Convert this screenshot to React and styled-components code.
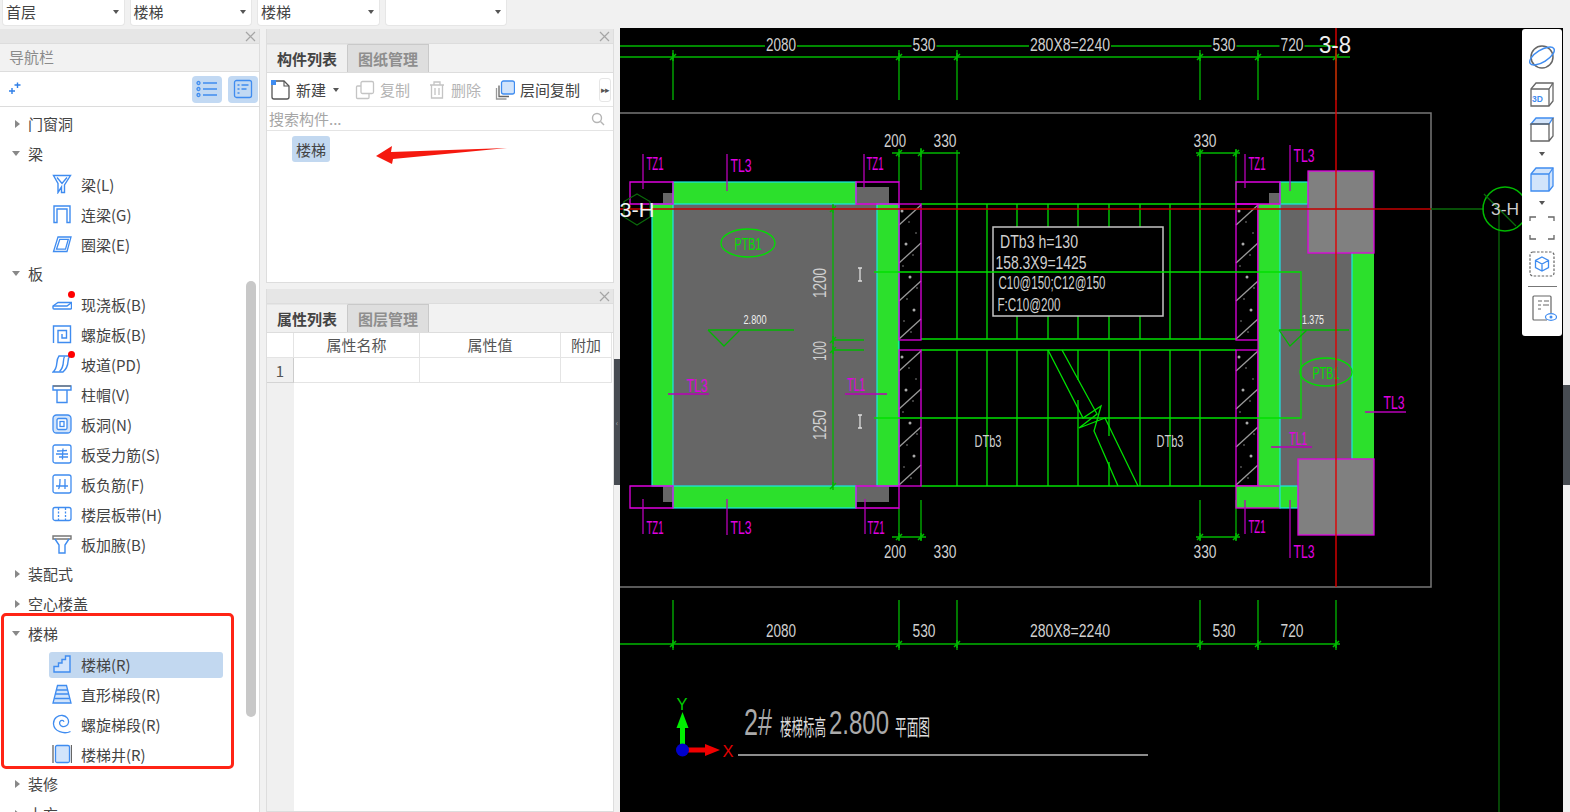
import React from 'react'
import styled, { createGlobalStyle } from 'styled-components'

const GlobalStyle = createGlobalStyle`
html, body {
  margin: 0;
  padding: 0;
  height: 100%;
  overflow: hidden;
  background: #f1f1f1;
  font-family: "Noto Sans CJK SC", "Noto Sans", sans-serif;
  color: #444;
}
* { box-sizing: border-box; }
`

const Page = styled.div`
width: 1570px;
height: 812px;
display: flex;
flex-direction: column;
overflow: hidden;
`
const TopBar = styled.div`
height: 28px;
flex: none;
display: flex;
gap: 5px;
padding-left: 2px;
`
const Dropdown = styled.div`
width: 122.5px;
height: 26px;
background: #fff;
border: 1px solid #e6e6e6;
border-top: none;
border-radius: 0 0 4px 4px;
display: flex;
align-items: center;
justify-content: space-between;
padding: 0 5px 2px 3px;
font-size: 15px;
color: #444;
`
const Caret = styled.span`
width: 0;
height: 0;
border-left: 3.5px solid transparent;
border-right: 3.5px solid transparent;
border-top: 4px solid #555;
margin: ${p => p.$margin || '0 0 0 0'};
`
const Main = styled.div`
flex: 1;
display: flex;
min-height: 0;
`
const NavPanel = styled.div`
width: 260px;
margin-top: 1px;
background: #fff;
border-right: 1px solid #ddd;
display: flex;
flex-direction: column;
position: relative;
overflow: hidden;
`
const Strip = styled.div`
height: 15px;
flex: none;
background: #e6e6e6;
display: flex;
align-items: center;
justify-content: flex-end;
padding-right: 3px;
border-bottom: 1px solid #ddd;
`
const NavTitle = styled.div`
height: 28px;
flex: none;
background: #f2f2f2;
border-bottom: 1px solid #ddd;
display: flex;
align-items: center;
padding: 0 0 2px 9px;
font-size: 15px;
color: #8b8b8b;
`
const NavTools = styled.div`
height: 35px;
flex: none;
display: flex;
align-items: center;
padding: 0 1px 0 8px;
gap: 6px;
border-bottom: 1px solid #dcdcdc;
`
const ToolSpacer = styled.div`
flex: 1;
`
const ToggleBtn = styled.div`
width: 30px;
height: 27px;
background: #c2d9f3;
border-radius: 4px;
display: flex;
align-items: center;
justify-content: center;
`
const Tree = styled.div`
padding-top: 3px;
flex: 1;
`
const TreeGroup = styled.div`
display: flex;
flex-direction: column;
`
const GroupRow = styled.div`
height: 30px;
display: flex;
align-items: center;
padding: 0 0 3px 13px;
font-size: 15px;
color: #444;
`
const Arrow = styled.span`
width: 15px;
display: flex;
align-items: center;
`
const Closed = styled.span`
width: 0;
height: 0;
border-top: 4px solid transparent;
border-bottom: 4px solid transparent;
border-left: 5px solid #888;
margin-left: 2px;
`
const Open = styled.span`
width: 0;
height: 0;
border-left: 4.5px solid transparent;
border-right: 4.5px solid transparent;
border-top: 5px solid #888;
margin-left: -1px;
`
const ItemRow = styled.div`
height: 26px;
margin: 2px 36px 2px 49px;
padding: 0 0 2px 3px;
display: flex;
align-items: center;
gap: 9px;
font-size: 15px;
color: #444;
border-radius: 3px;
background: ${p => (p.$active ? '#c2d8f0' : 'transparent')};
`
const IconBox = styled.span`
width: 20px;
height: 20px;
flex: none;
position: relative;
display: block;
`
const RedDot = styled.i`
position: absolute;
width: 7px;
height: 7px;
border-radius: 50%;
background: #f00;
right: -3px;
top: -3px;
`
const ScrollThumb = styled.div`
position: absolute;
left: 246px;
top: 252px;
width: 10px;
height: 436px;
border-radius: 5px;
background: #c8c8c8;
`
const RedFrame = styled.div`
position: absolute;
left: 1px;
top: 584px;
width: 233px;
height: 156px;
border: 3px solid #ff2415;
border-radius: 5px;
pointer-events: none;
`
const Gutter = styled.div`
width: ${p => p.$w}px;
flex: none;
padding-top: ${p => p.$top}px;
`
const HandleBar = styled.div`
height: ${p => p.$h}px;
width: 100%;
background: #474c52;
display: flex;
align-items: center;
justify-content: center;
color: #aaa;
font-size: 8px;
`
const Middle = styled.div`
width: 348px;
flex: none;
margin-top: 1px;
display: flex;
flex-direction: column;
gap: 6px;
`
const SidePanel = styled.div`
background: #fff;
border: 1px solid #ddd;
border-top: none;
display: flex;
flex-direction: column;
position: relative;
flex: ${p => (p.$grow ? 1 : 'none')};
height: ${p => (p.$grow ? 'auto' : `${p.$h}px`)};
min-height: 0;
`
const TabRow = styled.div`
height: 29px;
flex: none;
display: flex;
background: #f2f2f2;
border-bottom: 1px solid #ddd;
`
const Tab = styled.div`
width: ${p => p.$w}px;
display: flex;
align-items: center;
justify-content: center;
padding-bottom: 1px;
font-size: 15px;
font-weight: 700;
color: ${p => (p.$on ? '#444' : '#8e8e8e')};
background: ${p => (p.$on ? '#f0f0f0' : '#dedede')};
border-right: 1px solid #c9c9c9;
border-top: 1px solid ${p => (p.$on ? '#e6e6e6' : '#c9c9c9')};
`
const ListTools = styled.div`
height: 34px;
flex: none;
display: flex;
align-items: center;
padding-left: 3px;
border-bottom: 1px solid #e4e4e4;
font-size: 15px;
`
const ToolBtn = styled.div`
display: flex;
align-items: center;
gap: ${p => p.$gap || 5}px;
width: ${p => p.$w}px;
flex: none;
color: ${p => (p.$off ? '#b4b4b4' : '#444')};
`
const MoreBtn = styled.div`
width: 12px;
height: 24px;
margin-left: 1px;
border: 1px solid #e6e6e6;
border-radius: 3px;
font-size: 9px;
color: #555;
display: flex;
align-items: center;
justify-content: center;
letter-spacing: -1px;
`
const SearchRow = styled.div`
height: 24px;
flex: none;
display: flex;
align-items: center;
justify-content: space-between;
padding: 0 8px 0 2px;
font-size: 15px;
color: #a6a6a6;
border-bottom: 1px solid #e4e4e4;
`
const ListBody = styled.div`
flex: 1;
padding: 5px 0 0 25px;
`
const Chip = styled.div`
width: 38px;
height: 26px;
border-radius: 3px;
background: #c2d8f0;
font-size: 15px;
color: #444;
display: flex;
align-items: center;
justify-content: center;
`
const Pointer = styled.svg`
position: absolute;
left: 0;
top: 0;
pointer-events: none;
`
const PropGrid = styled.div`
flex: 1;
display: grid;
grid-template-columns: 27px 126px 141px 51px;
grid-template-rows: 25px 25px 1fr;
font-size: 15px;
color: #555;
width: 346px;
`
const PropHead = styled.div`
display: flex;
align-items: center;
justify-content: center;
padding-bottom: 2px;
border-right: 1px solid #e4e4e4;
border-bottom: 1px solid #e4e4e4;
`
const PropCell = styled.div`
border-right: 1px solid #e4e4e4;
border-bottom: 1px solid #e4e4e4;
`
const RowNo = styled.div`
display: flex;
align-items: center;
justify-content: center;
background: #f0f0f0;
border-right: 1px solid #ccc;
border-bottom: 1px solid #d4d4d4;
color: #555;
`
const GutterFill = styled.div`
background: #f0f0f0;
`
const Canvas = styled.div`
width: 943px;
flex: none;
position: relative;
background: #000;
`
const Drawing = styled.svg`
display: block;
`
const CadText = styled.text`
font-family: "Liberation Sans", sans-serif;
dominant-baseline: central;
text-anchor: middle;
`
const CadCjk = styled.text`
font-family: "Noto Sans CJK SC", sans-serif;
dominant-baseline: central;
text-anchor: start;
`
const ViewTools = styled.div`
position: absolute;
right: 1px;
top: 1px;
width: 40px;
height: 307px;
background: #fff;
border-radius: 3px;
display: flex;
flex-direction: column;
align-items: center;
padding-top: 10px;
`
const ViewIcon = styled.div`
height: ${p => p.$h}px;
width: 100%;
flex: none;
display: flex;
align-items: center;
justify-content: center;
`
const ViewRule = styled.div`
width: 29px;
height: 1px;
background: #777;
margin: 4px 0 4px;
flex: none;
`

const CloseX = () => (
  <svg width="11" height="11" viewBox="0 0 11 11">
    <path d="M1 1l9 9M10 1l-9 9" stroke="#a5a5a5" strokeWidth="1.2" />
  </svg>
)

const BLUE = '#3f8cf0'
const PALE = '#d2e4fb'

const treeIcons = {
  beam: <path d="M1.5 1.5h17L12.5 11v7.5h-3V13L6 18.5V9.5zM5 3.5l5 6 5-6" fill="none" stroke={BLUE} strokeWidth="1.4" />,
  lintel: <path d="M2 18.5V2h16v16.5h-3V5H5v13.5z" fill="none" stroke={BLUE} strokeWidth="1.4" />,
  ring: <path d="M6 3h13l-4 14.5H1.500zM7.800 5.300h8.500l-2.800 9.900H4.500z" fill="none" stroke={BLUE} strokeWidth="1.3" />,
  slab: <g fill="none" stroke={BLUE} strokeWidth="1.4"><path d="M1 12l5-3.500h13.500V14a1 1 0 0 1-1 1H2a1 1 0 0 1-1-1z" /><path d="M1 12h14l4-3" /></g>,
  spiral: <path d="M1.500 19V2h17v16.500H6V6.500h8.500V14H10V10" fill="none" stroke={BLUE} strokeWidth="1.4" />,
  ramp: <g fill="none" stroke={BLUE} strokeWidth="1.4"><path d="M7 2h11c-4 3 1 9-7 16H1c6-5 2-11 6-16z" /><path d="M12.500 2.500c-2.500 4 1 9-5 15" /></g>,
  cap: <g fill="none" stroke={BLUE} strokeWidth="1.4"><path d="M1 2h18v4H1z" /><path d="M5 6v12.500h10V6" /><path d="M1 2h18" stroke="#777" /></g>,
  hole: <g fill="none" stroke={BLUE} strokeWidth="1.3"><rect x="1" y="1" width="18" height="18" rx="3.500" fill={PALE} /><rect x="5" y="4.500" width="10" height="11" rx="1.500" fill="#fff" /><rect x="8" y="7.500" width="4" height="5" /></g>,
  rebar: <g fill="none" stroke={BLUE} strokeWidth="1.3"><rect x="1" y="1" width="18" height="18" rx="2" /><path d="M4 10h12M5 7c2 0 7-.5 10-.5M11 4.500c-.5 5-.5 8-.5 11M7 13h9" /></g>,
  negative: <g fill="none" stroke={BLUE} strokeWidth="1.3"><rect x="1" y="1" width="18" height="18" rx="2" /><path d="M4 12h12M8 5c0 5 0 8-1.500 10M13 5v10" /></g>,
  strip: <g fill="none" stroke={BLUE} strokeWidth="1.3"><rect x="1" y="3.500" width="18" height="13" rx="2" /><path d="M6.500 4v12M13.500 4v12" strokeDasharray="2 1.500" /></g>,
  haunch: <g fill="none" strokeWidth="1.4"><path d="M1 2h18v3H1z" stroke="#777" /><path d="M3 5l4 6v8h6v-8l4-6" stroke={BLUE} /></g>,
  stair: <path d="M2 18v-5.500h4.500V9h3.500V5.500h3.500V2h4.500v16z" fill={PALE} stroke={BLUE} strokeWidth="1.4" />,
  flight: <g fill="none" stroke={BLUE} strokeWidth="1.3"><path d="M5.500 1.500h9L19 19H1z" fill={PALE} /><path d="M4.600 6h10.800M3.300 10h13.400M2.300 14.500h15.400" /></g>,
  coil: <path d="M18.500 17.500C12 20.500 2 17.500 1.500 10 1.200 4 6.500 1 10.500 1.500c4 .5 6.500 3.500 6 7-.5 3-3.500 4.500-6 4-2.500-.6-3.500-3-2.500-5 1-1.500 3.500-1.500 4 .2" fill="none" stroke={BLUE} strokeWidth="1.300" />,
  well: <g fill="none"><path d="M1 1v18" stroke="#666" strokeWidth="1.300" /><rect x="3.500" y="1.500" width="14" height="17" rx="1.500" fill={PALE} stroke={BLUE} strokeWidth="1.300" /><path d="M19.500 1v18" stroke="#666" strokeWidth="1.300" /></g>,
}

const TreeIcon = ({ name, dot }) => (
  <IconBox>
    <svg width="20" height="20" viewBox="0 0 20 20">{treeIcons[name]}</svg>
    {dot && <RedDot />}
  </IconBox>
)

const tree = [
  { name: '门窗洞' },
  {
    name: '梁', open: true, items: [
      { name: '梁(L)', icon: 'beam' },
      { name: '连梁(G)', icon: 'lintel' },
      { name: '圈梁(E)', icon: 'ring' },
    ],
  },
  {
    name: '板', open: true, items: [
      { name: '现浇板(B)', icon: 'slab', dot: true },
      { name: '螺旋板(B)', icon: 'spiral' },
      { name: '坡道(PD)', icon: 'ramp', dot: true },
      { name: '柱帽(V)', icon: 'cap' },
      { name: '板洞(N)', icon: 'hole' },
      { name: '板受力筋(S)', icon: 'rebar' },
      { name: '板负筋(F)', icon: 'negative' },
      { name: '楼层板带(H)', icon: 'strip' },
      { name: '板加腋(B)', icon: 'haunch' },
    ],
  },
  { name: '装配式' },
  { name: '空心楼盖' },
  {
    name: '楼梯', open: true, items: [
      { name: '楼梯(R)', icon: 'stair', active: true },
      { name: '直形梯段(R)', icon: 'flight' },
      { name: '螺旋梯段(R)', icon: 'coil' },
      { name: '楼梯井(R)', icon: 'well' },
    ],
  },
  { name: '装修' },
  { name: '土方' },
]

// everything below is in page coordinates, the viewBox starts where the canvas does
const GREEN = '#00b800'
const BRIGHT = '#00e000'
const DARKG = '#0a6a0a'
const PURPLE = '#e000e0'
const LEADER = '#b800b8'
const CYAN = '#19e6e6'
const FILL = '#2ce02c'
const DIM = '#666666'
const BLOCK = '#808080'

const treads = [957, 987, 1017, 1048, 1078, 1109, 1140, 1170, 1200]
const lowerTreads = [
  [957, 350, 486], [987, 350, 486], [1017, 350, 486], [1048, 350, 486], [1078, 400, 486], [1109, 462, 486],
  [1078, 350, 380], [1109, 350, 436], [1140, 350, 486], [1170, 350, 486], [1200, 350, 486],
]
const hatchYs = [[204, 340], [350, 486]]

const Wall = ({ x }) => (
  <g>
    {hatchYs.map(([a, b]) => {
      const lines = []
      for (let y = b; y > a + 16; y -= 38) lines.push(y)
      return (
        <g key={a}>
          {lines.map(y => (
            <line key={y} x1={x} y1={y - 1} x2={x + 22} y2={y - 21} stroke="#9a9a9a" strokeWidth="1.300" />
          ))}
          {[0, 1, 2, 3, 4, 5, 6, 7, 8, 9, 10, 11].map(i => (
            <circle key={i} cx={x + 3 + (i * 7) % 17} cy={a + 7 + i * 11} r={i % 3 === 0 ? 1.500 : 0.700} fill="#aaa" />
          ))}
          <rect x={x} y={a} width="22" height={b - a} fill="none" stroke={PURPLE} strokeWidth="1.300" />
        </g>
      )
    })}
  </g>
)

const dims = [
  ['2080', 781, 30], ['530', 924, 23], ['280X8=2240', 1070, 80], ['530', 1224, 23], ['720', 1292, 23],
]
const purpleTexts = [
  ['TZ1', 655, 164, 17], ['TL3', 741, 166, 21], ['TZ1', 875, 164, 17], ['TZ1', 1257, 164, 17], ['TL3', 1304, 156, 21],
  ['TZ1', 655, 528, 17], ['TL3', 741, 528, 21], ['TZ1', 876, 528, 17], ['TZ1', 1257, 527, 17], ['TL3', 1304, 552, 21],
  ['TL3', 697, 386, 21], ['TL1', 856, 385, 18], ['TL1', 1298, 439, 18], ['TL3', 1394, 403, 21],
]
const leaders = [
  [643, 154, 189], [727, 154, 191], [864, 154, 188], [1245, 154, 188], [1290, 145, 191],
  [643, 499, 534], [727, 499, 535], [865, 499, 534], [1245, 500, 534], [1290, 500, 558],
]
const underlines = [[668, 709, 394], [845, 887, 394], [1271, 1312, 447], [1365, 1406, 412]]
const noteLines = [
  ['DTb3 h=130', 1039, 241, 78], ['158.3X9=1425', 1041, 262, 91], ['C10@150;C12@150', 1052, 282, 107], ['F:C10@200', 1029, 304, 63],
]

const Tick = ({ x, y }) => <path d={`M${x - 3} ${y + 3}L${x + 3} ${y - 3}M${x} ${y - 4}v8`} stroke={GREEN} strokeWidth="1.500" />

const Label = ({ x, y, w, size = 18, fill = '#d0d0d0', rotate, children }) => (
  <CadText
    x={x}
    y={y}
    fontSize={size}
    fill={fill}
    textLength={w}
    lengthAdjust="spacingAndGlyphs"
    transform={rotate ? `rotate(-90 ${x} ${y})` : undefined}
  >
    {children}
  </CadText>
)

const CadDrawing = () => (
  <Drawing width="943" height="784" viewBox="620 28 943 784">
    {/* dimension rows */}
    <path d="M620 46H1336M620 57H1350M620 644H1340" stroke={GREEN} strokeWidth="1.500" fill="none" />
    {[673, 899, 957, 1200, 1258, 1336].map(x => (
      <g key={x}>
        <line x1={x} y1="50" x2={x} y2="100" stroke={GREEN} strokeWidth="1.300" />
        <line x1={x} y1="600" x2={x} y2="650" stroke={GREEN} strokeWidth="1.300" />
        <Tick x={x} y={57} />
        <Tick x={x} y={644} />
      </g>
    ))}
    {dims.map(([t, x, w], i) => (
      <g key={i}>
        <rect x={x - w / 2 - 1} y="38" width={w + 2} height="14" fill="#000" />
        <Label x={x} y={45} w={w}>{t}</Label>
        <Label x={x} y={631} w={w}>{t}</Label>
      </g>
    ))}
    <rect x="610" y="113" width="821" height="474" fill="none" stroke="#777" strokeWidth="1.500" />

    {/* lower and upper extension lines */}
    <path d="M899 153V182M921 148V190M957 150V204M1200 150V204M1236 150V190M892 153H960M1196 153H1240" stroke={GREEN} strokeWidth="1.300" fill="none" />
    <path d="M899 508V540M921 500V540M1200 500V540M1236 500V540M892 537H926M1196 537H1240" stroke={GREEN} strokeWidth="1.300" fill="none" />
    <Tick x={899} y={153} /><Tick x={921} y={153} /><Tick x={1200} y={153} /><Tick x={1236} y={153} />
    <Tick x={899} y={537} /><Tick x={921} y={537} /><Tick x={1200} y={537} /><Tick x={1236} y={537} />

    {/* left landing */}
    <rect x="673" y="204" width="204" height="282" fill={DIM} />
    <rect x="663" y="193" width="10" height="11" fill={DIM} />
    <rect x="856" y="187" width="33" height="17" fill={DIM} />
    <rect x="663" y="486" width="10" height="16" fill={DIM} />
    <rect x="856" y="486" width="33" height="16" fill={DIM} />
    <rect x="652" y="204" width="21" height="282" fill={FILL} stroke={CYAN} strokeWidth="1.200" />
    <rect x="877" y="204" width="22" height="282" fill={FILL} stroke={CYAN} strokeWidth="1.200" />
    <rect x="673" y="182" width="183" height="22" fill={FILL} stroke={CYAN} strokeWidth="1.200" />
    <rect x="673" y="486" width="183" height="22" fill={FILL} stroke={CYAN} strokeWidth="1.200" />
    <path d="M630 182H673V204H630ZM856 182H899V204H856ZM630 486H673V508H630ZM856 486H899V508H856Z" fill="none" stroke={PURPLE} strokeWidth="1.300" />

    {/* stairs */}
    <path d="M921 204H1236M921 339H1236M921 350H1236M921 486H1236" stroke={BRIGHT} strokeWidth="1.300" fill="none" />
    {treads.map(x => <line key={x} x1={x} y1="204" x2={x} y2="339" stroke={BRIGHT} strokeWidth="1.300" />)}
    {lowerTreads.map(([x, a, b], i) => <line key={i} x1={x} y1={a} x2={x} y2={b} stroke={BRIGHT} strokeWidth="1.300" />)}
    <path d="M1048 350L1083 418 1101 406 1094 431 1118 486M1062 350L1097 414 1079 428 1105 418 1138 486" stroke={BRIGHT} strokeWidth="1.300" fill="none" />
    <Wall x={899} />
    <Wall x={1236} />
    <rect x="993" y="227" width="170" height="89" fill="#000" stroke="#c4c4c4" strokeWidth="1.500" />
    {noteLines.map(([t, x, y, w]) => <Label key={t} x={x} y={y} w={w} size={19}>{t}</Label>)}
    <Label x={988} y={441} w={27} size={17}>DTb3</Label>
    <Label x={1170} y={441} w={27} size={17}>DTb3</Label>

    {/* right landing */}
    <rect x="1280" y="204" width="72" height="282" fill={DIM} />
    <rect x="1269" y="193" width="11" height="11" fill={DIM} />
    <rect x="1258" y="204" width="22" height="282" fill={FILL} />
    <path d="M1258 204V486" stroke={PURPLE} strokeWidth="1.300" />
    <path d="M1280 204V486" stroke={CYAN} strokeWidth="1.200" />
    <rect x="1280" y="182" width="28" height="22" fill={FILL} stroke={CYAN} strokeWidth="1.200" />
    <rect x="1352" y="253" width="22" height="206" fill={FILL} />
    <path d="M1352 253V459" stroke={CYAN} strokeWidth="1.200" />
    <path d="M1236 182H1280V204H1236Z" fill="none" stroke={PURPLE} strokeWidth="1.300" />
    <rect x="1236" y="486" width="44" height="22" fill={FILL} stroke={PURPLE} strokeWidth="1.300" />
    <rect x="1280" y="486" width="18" height="22" fill={FILL} stroke={CYAN} strokeWidth="1.200" />
    <rect x="1308" y="171" width="66" height="82" fill={BLOCK} stroke={PURPLE} strokeWidth="1.300" />
    <rect x="1298" y="459" width="76" height="76" fill={BLOCK} stroke={PURPLE} strokeWidth="1.300" />
    <path d="M874 272H1301V418H874" stroke={BRIGHT} strokeWidth="1.300" fill="none" />

    {/* floor level marks and plate tags */}
    <path d="M708 330H794M708 330L724 346 740 330" stroke={GREEN} strokeWidth="1.300" fill="none" />
    <path d="M1279 330H1349M1279 330L1290 346 1307 330" stroke={GREEN} strokeWidth="1.300" fill="none" />
    <Label x={755} y={320} w={23} size={12} fill="#eee">2.800</Label>
    <Label x={1313} y={320} w={22} size={12} fill="#eee">1.375</Label>
    <ellipse cx="748" cy="243" rx="27" ry="14" fill="none" stroke={BRIGHT} strokeWidth="1.300" />
    <ellipse cx="1326" cy="372" rx="26" ry="14" fill="none" stroke={BRIGHT} strokeWidth="1.300" />
    <Label x={748} y={244} w={27} size={17} fill={BRIGHT}>PTB1</Label>
    <Label x={1326} y={373} w={27} size={17} fill={BRIGHT}>PTB1</Label>

    {/* section dimension */}
    <path d="M833 204V486M833 340H864M833 350H864" stroke={GREEN} strokeWidth="1.300" fill="none" />
    <Tick x={833} y={209} /><Tick x={833} y={340} /><Tick x={833} y={350} /><Tick x={833} y={486} />
    <Label x={820} y={283} w={30} rotate>1200</Label>
    <Label x={820} y={351} w={20} rotate>100</Label>
    <Label x={820} y={425} w={30} rotate>1250</Label>
    <path d="M860 268V281M858 268H862M858 281H862" stroke="#ddd" strokeWidth="1.300" fill="none" />
    <path d="M860 415V428M858 415H862M858 428H862" stroke="#ddd" strokeWidth="1.300" fill="none" />

    {/* purple leaders and labels */}
    {leaders.map(([x, a, b], i) => <line key={i} x1={x} y1={a} x2={x} y2={b} stroke={LEADER} strokeWidth="1.300" />)}
    {underlines.map(([a, b, y], i) => <line key={i} x1={a} y1={y} x2={b} y2={y} stroke={LEADER} strokeWidth="1.300" />)}
    {purpleTexts.map(([t, x, y, w], i) => <Label key={i} x={x} y={y} w={w} size={18} fill={PURPLE}>{t}</Label>)}

    {/* axes */}
    <line x1="620" y1="209" x2="1431" y2="209" stroke="#c40000" strokeWidth="1.600" />
    <line x1="1431" y1="209" x2="1484" y2="209" stroke={DARKG} strokeWidth="1.500" />
    <line x1="1336" y1="28" x2="1336" y2="587" stroke="#e00000" strokeWidth="1.400" />
    <line x1="1499" y1="209" x2="1499" y2="812" stroke={DARKG} strokeWidth="1.300" />
    <polygon points="637,194 650,201.500 650,217 637,225 624,217 624,201.500" fill="none" stroke={DARKG} strokeWidth="1.200" />
    <Label x={637} y={209} w={35} size={21} fill="#f2f2f2">3-H</Label>
    <circle cx="1505" cy="209" r="22" fill="none" stroke={GREEN} strokeWidth="1.500" />
    <line x1="1484" y1="194" x2="1516" y2="226" stroke={DARKG} strokeWidth="1.300" />
    <Label x={1505} y={209} w={28} size={17} fill="#ccc">3-H</Label>
    <Label x={1335} y={45} w={32} size={23} fill="#eee">3-8</Label>

    <Label x={895} y={141} w={22}>200</Label>
    <Label x={945} y={141} w={23}>330</Label>
    <Label x={1205} y={141} w={23}>330</Label>
    <Label x={895} y={552} w={22}>200</Label>
    <Label x={945} y={552} w={23}>330</Label>
    <Label x={1205} y={552} w={23}>330</Label>

    {/* title block */}
    <Label x={758} y={722} w={28} size={36} fill="#aaa">2#</Label>
    <CadCjk x={780} y={725} fontSize="22" fill="#ddd" textLength="46" lengthAdjust="spacingAndGlyphs">楼梯标高</CadCjk>
    <Label x={859} y={722} w={60} size={34} fill="#aaa">2.800</Label>
    <CadCjk x={895} y={725} fontSize="22" fill="#ddd" textLength="35" lengthAdjust="spacingAndGlyphs">平面图</CadCjk>
    <line x1="738" y1="755" x2="1148" y2="755" stroke="#bbb" strokeWidth="1.500" />

    {/* ucs gizmo */}
    <rect x="680" y="726" width="5" height="20" fill="#00ee00" />
    <polygon points="682.500,712 676.500,728 688.500,728" fill="#00ee00" />
    <rect x="686" y="747.500" width="22" height="5" fill="#f00000" />
    <polygon points="720,750 705,744 705,756" fill="#f00000" />
    <circle cx="682.500" cy="750" r="6.500" fill="#0000cc" />
    <Label x={682} y={704} w={11} size={16} fill="#00cc00">Y</Label>
    <Label x={728} y={751} w={11} size={16} fill="#e00000">X</Label>
  </Drawing>
)

const ViewIcons = {
  orbit: (
    <svg width="30" height="30" viewBox="0 0 30 30" fill="none" strokeWidth="1.500">
      <circle cx="15" cy="15" r="11" stroke="#666" />
      <ellipse cx="15" cy="14" rx="14" ry="6" transform="rotate(-32 15 14)" stroke={BLUE} />
    </svg>
  ),
  cube3d: (
    <svg width="28" height="28" viewBox="0 0 28 28" fill="none" strokeWidth="1.300">
      <path d="M3 9l5-6h17v18l-4 5H3z" stroke="#666" />
      <path d="M3 9h18v17M21 9l4-6" stroke="#666" />
      <text x="4" y="22" fontSize="8.500" fontWeight="700" fill={BLUE} stroke="none" fontFamily="Liberation Sans">3D</text>
    </svg>
  ),
  cubeTop: (
    <svg width="28" height="28" viewBox="0 0 28 28" fill="none" strokeWidth="1.300">
      <path d="M3 9l5-6h17l-4 6z" fill={PALE} stroke={BLUE} />
      <path d="M3 9h18v17H3zM21 26l4-5V3" stroke="#666" />
    </svg>
  ),
  cubeSolid: (
    <svg width="28" height="28" viewBox="0 0 28 28" strokeWidth="1.300">
      <path d="M3 9l5-6h17v18l-4 5H3z" fill={PALE} stroke={BLUE} />
      <path d="M3 9h18v17M21 9l4-6" fill="none" stroke={BLUE} />
    </svg>
  ),
  corners: (
    <svg width="28" height="28" viewBox="0 0 28 28" fill="none" stroke="#666" strokeWidth="1.300">
      <path d="M2 7V3h6M20 3h6v4M26 21v4h-6M8 25H2v-4" />
    </svg>
  ),
  dashedCube: (
    <svg width="28" height="28" viewBox="0 0 28 28" fill="none" strokeWidth="1.200">
      <rect x="2" y="2" width="24" height="24" rx="3" stroke="#666" strokeDasharray="2.500 1.500" />
      <path d="M14 7l6.500 3.500v7L14 21l-6.500-3.500v-7zM7.500 10.500L14 14l6.500-3.500M14 14v7" stroke={BLUE} strokeWidth="1.300" />
    </svg>
  ),
  docEye: (
    <svg width="30" height="30" viewBox="0 0 30 30" fill="none" strokeWidth="1.200">
      <path d="M21 21V5a1 1 0 0 0-1-1H4a1 1 0 0 0-1 1v22a1 1 0 0 0 1 1h13" transform="translate(3 -1)" stroke="#666" />
      <path d="M11 8h4M17 8h5M11 12h3M16 12h6M11 16h3" stroke="#666" />
      <ellipse cx="24" cy="24" rx="5.500" ry="3.300" stroke={BLUE} />
      <circle cx="24" cy="24" r="1.500" fill={BLUE} />
    </svg>
  ),
}

const NewDoc = () => (
  <svg width="22" height="22" viewBox="0 0 22 22" fill="none">
    <path d="M2 6v12a2 2 0 0 0 2 2h13a2 2 0 0 0 2-2V7l-5-5H6" stroke="#555" strokeWidth="1.300" />
    <path d="M14 2v5h5" stroke="#555" strokeWidth="1.100" />
    <rect x="1" y="1" width="5" height="5" fill={BLUE} />
  </svg>
)
const CopyIcon = () => (
  <svg width="20" height="20" viewBox="0 0 20 20" fill="none" stroke="#c4c4c4" strokeWidth="1.300">
    <rect x="6" y="1.500" width="12.500" height="12" rx="1.500" />
    <path d="M6 6H2.500a1 1 0 0 0-1 1v10.500a1 1 0 0 0 1 1H13a1 1 0 0 0 1-1V14" />
  </svg>
)
const TrashIcon = () => (
  <svg width="18" height="20" viewBox="0 0 18 20" fill="none" stroke="#c4c4c4" strokeWidth="1.300">
    <path d="M2 5h14M6 5V2h6v3M3.500 5v13h11V5M7 8v7M11 8v7" />
  </svg>
)
const FloorCopyIcon = () => (
  <svg width="20" height="20" viewBox="0 0 20 20" fill="none" strokeWidth="1.300">
    <rect x="6.500" y="1" width="13" height="13" rx="2" fill={PALE} stroke={BLUE} />
    <path d="M4 5.500v11h10" stroke="#666" />
    <path d="M1.500 8v11h10" stroke="#999" />
  </svg>
)

export default function App() {
  return (
    <Page>
      <GlobalStyle />
      <TopBar>
        {['首层', '楼梯', '楼梯', ''].map((v, i) => (
          <Dropdown key={i}><span>{v}</span><Caret /></Dropdown>
        ))}
      </TopBar>
      <Main>
        <NavPanel>
          <Strip><CloseX /></Strip>
          <NavTitle>导航栏</NavTitle>
          <NavTools>
            <svg width="14" height="14" viewBox="0 0 14 14" stroke="#2f7fe8" strokeWidth="1.400">
              <path d="M6.500 3h6M9.500 .5v5.500M1 9h6M4 6v6" />
            </svg>
            <ToolSpacer />
            <ToggleBtn>
              <svg width="22" height="18" viewBox="0 0 22 18" fill="none" stroke={BLUE} strokeWidth="1.300">
                <circle cx="2.500" cy="3" r="1.500" /><circle cx="2.500" cy="9" r="1.500" /><circle cx="2.500" cy="15" r="1.500" />
                <path d="M7 3h14M7 9h14M7 15h14" />
              </svg>
            </ToggleBtn>
            <ToggleBtn>
              <svg width="20" height="20" viewBox="0 0 20 20" fill="none" stroke={BLUE} strokeWidth="1.300">
                <rect x="1.500" y="1.500" width="17" height="17" rx="2" />
                <path d="M4.500 6h2M8.500 6h7M4.500 10h2M8.500 10h5M4.500 14h2" />
              </svg>
            </ToggleBtn>
          </NavTools>
          <Tree>
            {tree.map(g => (
              <TreeGroup key={g.name}>
                <GroupRow><Arrow>{g.open ? <Open /> : <Closed />}</Arrow>{g.name}</GroupRow>
                {g.items && g.items.map(it => (
                  <ItemRow key={it.name} $active={it.active}>
                    <TreeIcon name={it.icon} dot={it.dot} />
                    {it.name}
                  </ItemRow>
                ))}
              </TreeGroup>
            ))}
          </Tree>
          <ScrollThumb />
          <RedFrame />
        </NavPanel>
        <Gutter $w={6} $top={0} />
        <Middle>
          <SidePanel $h={254}>
            <Strip><CloseX /></Strip>
            <TabRow>
              <Tab $on $w={81}>构件列表</Tab>
              <Tab $w={81}>图纸管理</Tab>
            </TabRow>
            <ListTools>
              <ToolBtn $w={85} $gap={4}><NewDoc />新建<Caret $margin="0 0 0 3px" /></ToolBtn>
              <ToolBtn $w={73} $off><CopyIcon />复制</ToolBtn>
              <ToolBtn $w={67} $off><TrashIcon />删除</ToolBtn>
              <ToolBtn $w={103}><FloorCopyIcon />层间复制</ToolBtn>
              <MoreBtn>▸▸</MoreBtn>
            </ListTools>
            <SearchRow>
              搜索构件...
              <svg width="14" height="14" viewBox="0 0 14 14" fill="none" stroke="#b5b5b5" strokeWidth="1.400">
                <circle cx="6" cy="6" r="4.500" /><path d="M9.500 9.500L13 13" />
              </svg>
            </SearchRow>
            <ListBody><Chip>楼梯</Chip></ListBody>
            <Pointer width="348" height="254">
              <polygon points="109,127 125,117 124,123 240,119 126,130 125,135" fill="#f5190f" />
            </Pointer>
          </SidePanel>
          <SidePanel $grow>
            <Strip><CloseX /></Strip>
            <TabRow>
              <Tab $on $w={81}>属性列表</Tab>
              <Tab $w={81}>图层管理</Tab>
            </TabRow>
            <PropGrid>
              <PropHead />
              <PropHead>属性名称</PropHead>
              <PropHead>属性值</PropHead>
              <PropHead>附加</PropHead>
              <RowNo>1</RowNo>
              <PropCell /><PropCell /><PropCell />
              <GutterFill />
            </PropGrid>
          </SidePanel>
        </Middle>
        <Gutter $w={6} $top={331}><HandleBar $h={126}>‹</HandleBar></Gutter>
        <Canvas>
          <CadDrawing />
          <ViewTools>
            <ViewIcon $h={36}>{ViewIcons.orbit}</ViewIcon>
            <ViewIcon $h={37}>{ViewIcons.cube3d}</ViewIcon>
            <ViewIcon $h={34}>{ViewIcons.cubeTop}</ViewIcon>
            <ViewIcon $h={16}><Caret $margin="0" /></ViewIcon>
            <ViewIcon $h={34}>{ViewIcons.cubeSolid}</ViewIcon>
            <ViewIcon $h={14}><Caret $margin="0" /></ViewIcon>
            <ViewIcon $h={36}>{ViewIcons.corners}</ViewIcon>
            <ViewIcon $h={36}>{ViewIcons.dashedCube}</ViewIcon>
            <ViewRule />
            <ViewIcon $h={34}>{ViewIcons.docEye}</ViewIcon>
          </ViewTools>
        </Canvas>
        <Gutter $w={7} $top={357}><HandleBar $h={100} /></Gutter>
      </Main>
    </Page>
  )
}
